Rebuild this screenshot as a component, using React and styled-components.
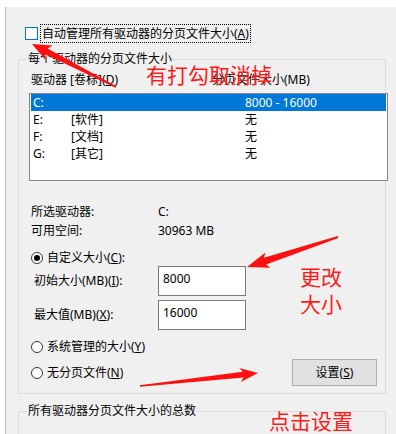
import React from "react";
import styled, { createGlobalStyle } from "styled-components";

const GlobalStyle = createGlobalStyle`
  html, body {
    margin: 0;
    padding: 0;
    background: #fff;
  }
  body {
    font-family: "Noto Sans", "Noto Sans CJK SC", sans-serif;
    font-size: 12px;
    color: #000;
  }
  * {
    box-sizing: border-box;
  }
`;

const drives = [
  { letter: "C:", label: "", size: "8000 - 16000", selected: true },
  { letter: "E:", label: "[软件]", size: "无" },
  { letter: "F:", label: "[文档]", size: "无" },
  { letter: "G:", label: "[其它]", size: "无" },
];

// tapered annotation arrow, from tail to tip
function arrowPoints(tail, tip, headLen, headHalf, neckHalf, tailHalf) {
  const dx = tip[0] - tail[0];
  const dy = tip[1] - tail[1];
  const len = Math.hypot(dx, dy);
  const ux = dx / len;
  const uy = dy / len;
  const nx = -uy;
  const ny = ux;
  const bx = tip[0] - ux * headLen;
  const by = tip[1] - uy * headLen;
  const pts = [
    tip,
    [bx + nx * headHalf, by + ny * headHalf],
    [bx + ux * 3 + nx * neckHalf, by + uy * 3 + ny * neckHalf],
    [tail[0] + nx * tailHalf, tail[1] + ny * tailHalf],
    [tail[0] - nx * tailHalf, tail[1] - ny * tailHalf],
    [bx + ux * 3 - nx * neckHalf, by + uy * 3 - ny * neckHalf],
    [bx - nx * headHalf, by - ny * headHalf],
  ];
  return pts.map((p) => p[0].toFixed(1) + "," + p[1].toFixed(1)).join(" ");
}

export default function App() {
  return (
    <Page>
      <GlobalStyle />
      <Dialog>
        <CheckRow>
          <CheckBox />
          <FocusLabel>
            自动管理所有驱动器的分页文件大小(<u>A</u>)
          </FocusLabel>
        </CheckRow>

        <GroupBox>
          <Legend>每个驱动器的分页文件大小</Legend>
          <ListHeader>
            <span>
              驱动器 [卷标](<u>D</u>)
            </span>
            <span>分页文件大小(MB)</span>
          </ListHeader>
          <ListBox>
            {drives.map((d) => (
              <DriveRow key={d.letter} $selected={d.selected}>
                <span>{d.letter}</span>
                <span>{d.label}</span>
                <span>{d.size}</span>
              </DriveRow>
            ))}
          </ListBox>

          <InfoGrid>
            <span>所选驱动器:</span>
            <span>C:</span>
            <span>可用空间:</span>
            <span>30963 MB</span>
          </InfoGrid>

          <RadioRow $top={11}>
            <Radio $checked />
            <span>
              自定义大小(<u>C</u>):
            </span>
          </RadioRow>
          <FieldRow $top={0}>
            <span>
              初始大小(MB)(<u>I</u>):
            </span>
            <TextBox readOnly value="8000" />
          </FieldRow>
          <FieldRow $top={4}>
            <span>
              最大值(MB)(<u>X</u>):
            </span>
            <TextBox readOnly value="16000" />
          </FieldRow>
          <RadioRow $top={9}>
            <Radio />
            <span>
              系统管理的大小(<u>Y</u>)
            </span>
          </RadioRow>
          <BottomRow>
            <RadioRow $top={0}>
              <Radio />
              <span>
                无分页文件(<u>N</u>)
              </span>
            </RadioRow>
            <Button>
              设置(<u>S</u>)
            </Button>
          </BottomRow>
        </GroupBox>

        <TotalBox>
          <Legend>所有驱动器分页文件大小的总数</Legend>
        </TotalBox>
      </Dialog>

      <Overlay>
        <svg width="396" height="434" viewBox="0 0 396 434">
          <polygon fill="#ff1010" points={arrowPoints([116, 87], [32, 44], 19, 8, 3, 0.8)} />
          <polygon fill="#ff1010" points={arrowPoints([338, 237], [247, 267], 22, 8, 3.5, 1)} />
          <polygon fill="#ff1010" points={arrowPoints([140, 386], [258, 373], 18, 7, 3, 0.8)} />
        </svg>
        <Note $x={146} $y={61}>有打勾取消掉</Note>
        <Note $x={300} $y={263}>
          更改
          <br />
          大小
        </Note>
        <Note $x={269} $y={407}>点击设置</Note>
      </Overlay>
    </Page>
  );
}

const Page = styled.div`
  position: relative;
  width: 396px;
  height: 434px;
  overflow: hidden;
  background: #fff;
  padding: 7px 0 0 5px;
`;

const Dialog = styled.div`
  height: 100%;
  background: #f0f0f0;
  border-left: 1px solid #b9b9b9;
  padding-top: 17px;
  line-height: 16px;
`;

const CheckRow = styled.div`
  display: flex;
  align-items: center;
  gap: 2px;
  height: 19px;
  padding-left: 19px;
`;

const CheckBox = styled.span`
  width: 13px;
  height: 13px;
  border: 1px solid #0078d7;
  background: #fff;
`;

const FocusLabel = styled.span`
  border: 1px dotted #000;
  padding: 0 1px;
  line-height: 17px;
`;

const GroupBox = styled.fieldset`
  margin: 8px 10px 0 12px;
  padding: 0 0 7px 8px;
  border: 1px solid #dcdcdc;
  min-width: 0;
`;

const TotalBox = styled(GroupBox)`
  margin-top: 9px;
  height: 60px;
`;

const Legend = styled.legend`
  padding: 0 1px;
  line-height: 16px;
`;

const ListHeader = styled.div`
  display: grid;
  grid-template-columns: 181px 1fr;
  margin-top: 5px;
  padding-left: 4px;
`;

const ListBox = styled.div`
  height: 88px;
  margin: 5px -3px 0 2px;
  padding: 0 1px;
  border: 1px solid #828790;
  background: #fff;
`;

const DriveRow = styled.div`
  display: grid;
  grid-template-columns: 38px 174px 1fr;
  height: 17px;
  line-height: 17px;
  padding-left: 2px;
  background: ${(p) => (p.$selected ? "#0078d7" : "transparent")};
  color: ${(p) => (p.$selected ? "#fff" : "#000")};
`;

const InfoGrid = styled.div`
  display: grid;
  grid-template-columns: 127px 1fr;
  row-gap: 3px;
  margin-top: 23px;
  padding-left: 4px;
`;

const RadioRow = styled.div`
  display: flex;
  align-items: center;
  gap: 4px;
  height: 16px;
  margin-top: ${(p) => p.$top}px;
  padding-left: 4px;
`;

const Radio = styled.span`
  position: relative;
  width: 12px;
  height: 12px;
  border: 1px solid #333;
  border-radius: 50%;
  background: #fff;
  &::after {
    content: "";
    display: ${(p) => (p.$checked ? "block" : "none")};
    position: absolute;
    left: 2px;
    top: 2px;
    width: 6px;
    height: 6px;
    border-radius: 50%;
    background: #000;
  }
`;

const FieldRow = styled.div`
  display: grid;
  grid-template-columns: 124px 88px;
  align-items: center;
  margin-top: ${(p) => p.$top}px;
  padding-left: 7px;
`;

const TextBox = styled.input`
  width: 88px;
  height: 30px;
  padding: 3px 4px 9px;
  border: 1px solid #7a7a7a;
  background: #fff;
  font: inherit;
  line-height: 16px;
  color: #000;
  outline: none;
`;

const BottomRow = styled.div`
  display: flex;
  align-items: center;
  justify-content: space-between;
  height: 27px;
  margin-top: 4px;
`;

const Button = styled.div`
  display: flex;
  align-items: center;
  justify-content: center;
  width: 85px;
  height: 27px;
  margin-right: 8px;
  border: 1px solid #adadad;
  background: #e1e1e1;
`;

const Overlay = styled.div`
  position: absolute;
  inset: 0;
  pointer-events: none;
  svg {
    position: absolute;
    left: 0;
    top: 0;
  }
`;

const Note = styled.div`
  position: absolute;
  left: ${(p) => p.$x}px;
  top: ${(p) => p.$y}px;
  font-family: "Noto Sans CJK SC", sans-serif;
  font-size: 21px;
  line-height: 27px;
  color: #ff1a1a;
  white-space: nowrap;
`;
